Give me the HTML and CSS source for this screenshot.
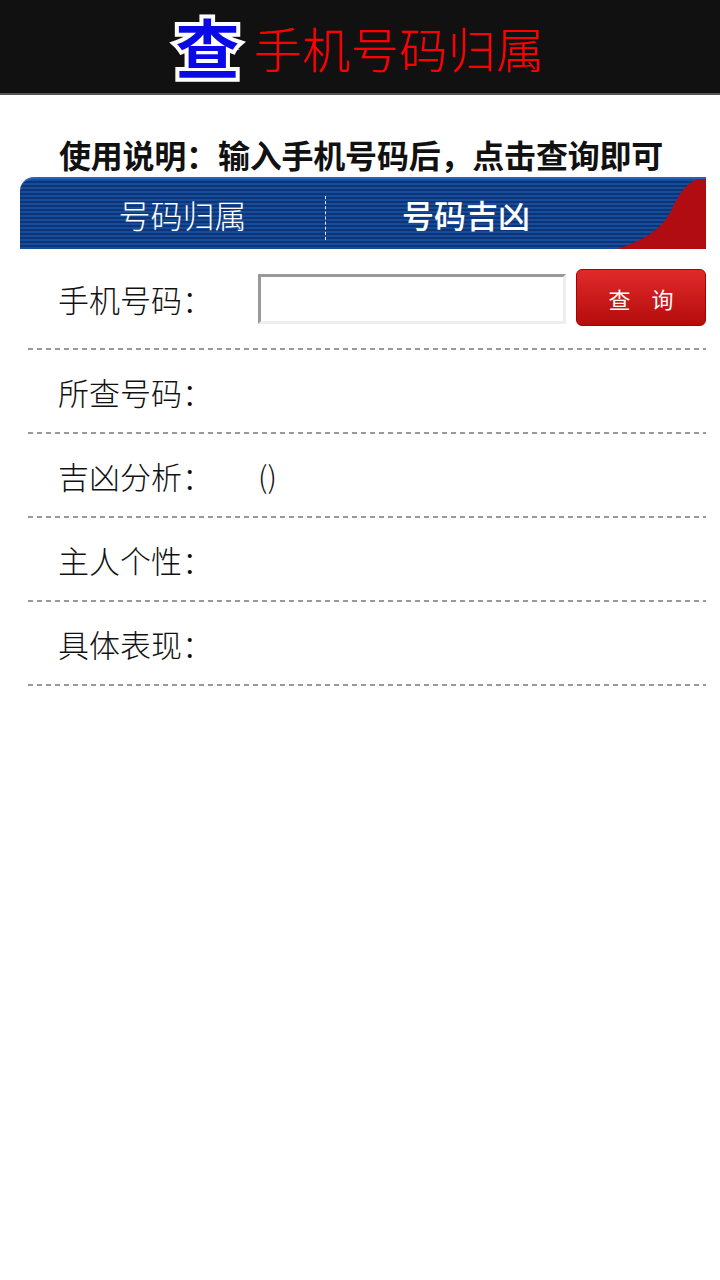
FILE: index.html
```html
<!DOCTYPE html>
<html lang="zh">
  <head>
    <meta charset="UTF-8" />
    <meta name="viewport" content="width=device-width, initial-scale=1.0" />
    <title>手机号码归属</title>
    <link rel="stylesheet" href="styles.css">
  </head>
  <body>
    <div class="header">
      <span class="logo">查</span><span class="title">手机号码归属</span>
    </div>

    <p class="guide">使用说明：输入手机号码后，点击查询即可</p>

    <div class="tabs">
      <div class="tab">号码归属</div>
      <div class="tab-line"></div>
      <div class="tab tab-on">号码吉凶</div>
      <svg class="tab-corner" width="96" height="72" viewBox="0 0 96 72">
        <path d="M0 72 C30 64 50 52 60 34 C68 16 76 4 88 0 L96 0 L96 72 Z" fill="#b10c12" />
      </svg>
    </div>

    <ul class="list">
      <li class="list-item first">
        <span class="list-label">手机号码：</span>
        <input type="text" class="text-phone" />
        <button type="button" class="btn-search">查 询</button>
      </li>
      <li class="list-item">
        <span class="list-label">所查号码：</span><span class="list-text"></span>
      </li>
      <li class="list-item">
        <span class="list-label">吉凶分析：</span><span class="list-text">()</span>
      </li>
      <li class="list-item">
        <span class="list-label">主人个性：</span><span class="list-text"></span>
      </li>
      <li class="list-item">
        <span class="list-label">具体表现：</span><span class="list-text"></span>
      </li>
    </ul>
  </body>
</html>
```

FILE: styles.css
```css
body {
  margin: 0;
  background: #fff;
  font-family: "Noto Sans CJK SC", "DejaVu Sans", sans-serif;
  color: #111;
}
.header {
  height: 93px;
  background: #111;
  border-bottom: 2px solid #555;
  display: flex;
  align-items: center;
  justify-content: center;
  padding-left: 0;
}
.logo {
  font-size: 64px;
  font-weight: 700;
  color: #0a0ae6;
  -webkit-text-stroke: 8px #fff;
  paint-order: stroke fill;
  line-height: 1;
  margin-right: 14px;
  margin-top: -4px;
}
.title {
  font-size: 48px;
  color: #ff0000;
  line-height: 1;
  font-weight: 300;
  letter-spacing: 0.5px;
}
.guide {
  margin: 38px 0 0;
  text-align: center;
  font-size: 32px;
  font-weight: 700;
  line-height: 42px;
  padding-left: 2px;
  letter-spacing: -0.2px;
}
.tabs {
  position: relative;
  margin: 2px 14px 0 20px;
  height: 72px;
  border-radius: 14px 0 0 0;
  overflow: hidden;
  display: flex;
  align-items: center;
  background: repeating-linear-gradient(180deg, #164d9a 0px, #164d9a 2px, #0e3478 2px, #0e3478 4px);
  border-top: 2px solid #2a62b8;
  box-sizing: border-box;
}
.tab {
  width: 305px;
  padding-left: 20px;
  box-sizing: border-box;
  text-align: center;
  color: #fff;
  font-size: 32px;
  line-height: 40px;
  font-weight: 300;
}
.tab-on {
  width: 280px;
  padding-left: 0;
  font-weight: 500;
}
.tab-line {
  width: 0;
  height: 44px;
  margin-top: 8px;
  border-left: 1px dashed #e8e8e8;
}
.tab-corner {
  position: absolute;
  right: 0;
  top: 0;
}
.list {
  margin: 0 14px 0 28px;
  padding: 0;
  list-style: none;
}
.list-item {
  height: 82px;
  display: flex;
  align-items: center;
  background: repeating-linear-gradient(90deg, #999 0px, #999 5px, transparent 5px, transparent 9px) bottom / 100% 2px no-repeat;
  padding-bottom: 2px;
}
.list-item.first {
  height: 99px;
}
.list-label {
  width: 230px;
  padding-left: 30px;
  font-size: 31px;
  font-weight: 300;
  box-sizing: border-box;
}
.list-text {
  font-size: 30px;
  font-weight: 300;
}
.text-phone {
  width: 308px;
  height: 50px;
  box-sizing: border-box;
  border: 3px solid #eee;
  border-top-color: #999;
  border-left-color: #999;
  margin: 0 10px 0 0;
  padding: 0 6px;
  font-size: 24px;
}
.btn-search {
  width: 130px;
  height: 57px;
  border: 1px solid #a00;
  border-radius: 6px;
  background: linear-gradient(180deg, #e02a2a, #b40c0c);
  color: #fff;
  font-family: "Noto Sans CJK SC", sans-serif;
  font-size: 22px;
  letter-spacing: 8px;
  padding: 0 0 0 8px;
  margin-top: -2px;
}
```
